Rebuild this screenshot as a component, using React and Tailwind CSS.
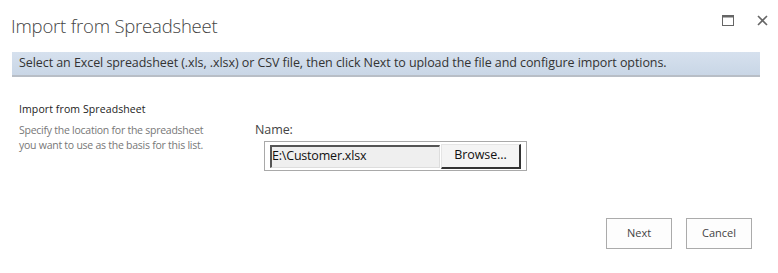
export default function App() {
  return (
    <div className="w-[778px] h-[273px] bg-white text-[#444] overflow-hidden" style={{ fontFamily: '"Open Sans", "Noto Sans", sans-serif' }}>
      {/* header */}
      <div className="flex items-start justify-between h-[52px]">
        <h1 className="ml-[11px] mt-[13px] text-[18.5px] font-light leading-[26px] text-[#444] tracking-[-0.2px]">
          Import from Spreadsheet
        </h1>
        <div className="flex items-center gap-[23px] mt-[15px] mr-[10px]">
          <svg width="12" height="11" viewBox="0 0 12 11" className="text-[#666]">
            <rect x="0.5" y="0.5" width="11" height="10" fill="none" stroke="currentColor" />
            <rect x="0" y="0" width="12" height="2.5" fill="currentColor" />
          </svg>
          <svg width="11" height="11" viewBox="0 0 11 11" className="text-[#666]">
            <path d="M1 1 L10 10 M10 1 L1 10" stroke="currentColor" strokeWidth="1.6" />
          </svg>
        </div>
      </div>

      {/* banner */}
      <div className="mx-[12px] w-[748px] h-[25px] bg-gradient-to-b from-[#d6e1ee] to-[#c9d6e6] border-b-2 border-[#b8bec6] flex items-center pl-[7px]">
        <p className="text-[12.5px] text-[#333] tracking-[-0.07px]">
          Select an Excel spreadsheet (.xls, .xlsx) or CSV file, then click Next to upload the file and configure import options.
        </p>
      </div>

      {/* body */}
      <div className="flex mt-[25px]">
        <div className="ml-[19px] w-[236px]">
          <div className="text-[10.5px] text-[#222] leading-[15px] tracking-[0.1px]">Import from Spreadsheet</div>
          <div className="mt-[6px] text-[10.5px] text-[#777] leading-[15px] tracking-[-0.25px]">
            Specify the location for the spreadsheet
            <br />
            you want to use as the basis for this list.
          </div>
        </div>
        <div className="pt-[20px]">
          <div className="text-[12.5px] leading-[16px] text-[#444] tracking-[-0.1px]">Name:</div>
          <div className="mt-[3px] ml-[9px] w-[263px] h-[30px] border border-[#a9a9a9] flex items-center pl-[5px] gap-[1px]">
            <div className="w-[170px] h-[23px] bg-[#efefef] border-t-2 border-l-2 border-r border-b border-t-[#555] border-l-[#555] border-r-[#ddd] border-b-[#ddd] flex items-center">
              <span className="text-[12.5px] text-[#111] tracking-[-0.2px]">E:\Customer.xlsx</span>
            </div>
            <button className="w-[80px] h-[25px] bg-[#f4f4f4] border border-t-[#e5e5e5] border-l-[#e5e5e5] border-r-2 border-b-2 border-r-[#333] border-b-[#333] text-[12.5px] text-[#111] tracking-[-0.1px]">
              Browse...
            </button>
          </div>
        </div>
      </div>

      {/* footer */}
      <div className="flex justify-end gap-[14px] mr-[26px] mt-[47px]">
        <button className="w-[66px] h-[31px] border border-[#ababab] bg-[#fdfdfd] text-[11px] text-[#444]">Next</button>
        <button className="w-[66px] h-[31px] border border-[#ababab] bg-[#fdfdfd] text-[11px] text-[#444]">Cancel</button>
      </div>
    </div>
  );
}
